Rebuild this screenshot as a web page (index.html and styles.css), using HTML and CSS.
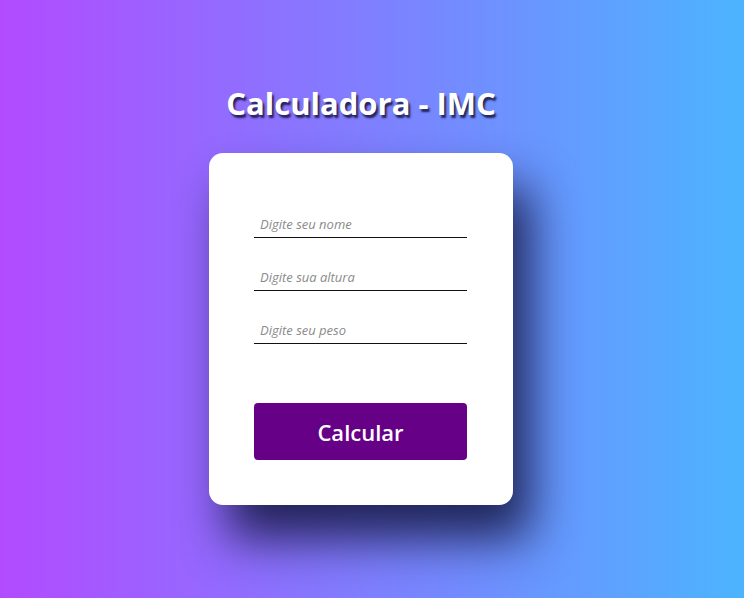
FILE: index.html
```html
<!DOCTYPE html>
<html lang="pt-BR">
<head>
<meta charset="utf-8">
<title>Calculadora - IMC</title>
<link rel="stylesheet" href="styles.css">
</head>
<body>
<main class="page">
  <h1 class="title">Calculadora - IMC</h1>
  <form class="card">
    <div class="fields">
      <input class="field" type="text" placeholder="Digite seu nome">
      <input class="field" type="text" placeholder="Digite sua altura">
      <input class="field" type="text" placeholder="Digite seu peso">
    </div>
    <button class="btn" type="button">Calcular</button>
  </form>
</main>
</body>
</html>
```
FILE: styles.css
```css
* { box-sizing: border-box; }
html, body { margin: 0; height: 100%; }
body {
  background: linear-gradient(to right, #b24bff, #4cb4ff);
  font-family: "Open Sans", "Noto Sans", sans-serif;
}
.page {
  display: flex;
  flex-direction: column;
  align-items: center;
  padding: 82px 22px 0 0;
}
.title {
  margin: 0;
  color: #fff;
  font-size: 31px;
  font-weight: 700;
  line-height: 42px;
  text-shadow: 2px 3px 2px rgba(20, 20, 60, 0.85);
}
.card {
  margin-top: 29px;
  width: 304px;
  height: 352px;
  background: #fff;
  border-radius: 14px;
  box-shadow: 18px 34px 48px rgba(22, 26, 70, 0.9);
  padding: 58px 46px 0 45px;
  display: flex;
  flex-direction: column;
}
.fields {
  display: flex;
  flex-direction: column;
  gap: 26px;
}
.field {
  width: 213px;
  height: 27px;
  border: none;
  border-bottom: 1.5px solid #111;
  padding: 0 6px;
  font-family: inherit;
  font-size: 13px;
  font-style: italic;
  outline: none;
  background: transparent;
}
.field::placeholder { color: #8a8a8a; }
.btn {
  margin-top: 59px;
  width: 213px;
  height: 57px;
  border: none;
  border-radius: 4px;
  background: #660087;
  color: #fff;
  font-family: inherit;
  font-size: 22px;
  font-weight: 600;
}
```
